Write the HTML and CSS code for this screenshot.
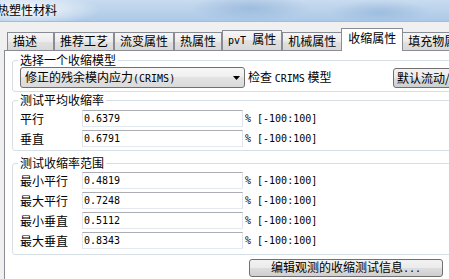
FILE: index.html
```html
<!DOCTYPE html>
<html>
<head>
  <meta charset="utf-8">
  <title>热塑性材料</title>
  <link rel="stylesheet" href="styles.css">
</head>
<body>
  <div class="titlebar"><span class="title">热塑性材料</span></div>

  <div class="tabs">
    <div class="tab tab-first">描述</div>
    <div class="tab">推荐工艺</div>
    <div class="tab">流变属性</div>
    <div class="tab">热属性</div>
    <div class="tab"><span class="en">pvT </span>属性</div>
    <div class="tab">机械属性</div>
    <div class="tab active">收缩属性</div>
    <div class="tab">填充物属性</div>
  </div>

  <div class="panel">
    <fieldset class="group group-model">
      <legend>选择一个收缩模型</legend>
      <div class="model-row">
        <div class="combo">
          <span>修正的残余模内应力<span class="en">(CRIMS)</span></span>
          <svg class="arrow" width="7" height="4" viewBox="0 0 7 4"><polygon points="0,0 7,0 3.5,4" fill="#000"/></svg>
        </div>
        <span class="check">检查 <span class="en">CRIMS</span> 模型</span>
        <button class="btn btn-default">默认流动/保压</button>
      </div>
    </fieldset>

    <fieldset class="group group-avg">
      <legend>测试平均收缩率</legend>
      <div class="field-row">
        <span class="field-label">平行</span>
        <input class="field-input" type="text" value="0.6379" readonly>
        <span class="field-range en">% [-100:100]</span>
      </div>
      <div class="field-row">
        <span class="field-label">垂直</span>
        <input class="field-input" type="text" value="0.6791" readonly>
        <span class="field-range en">% [-100:100]</span>
      </div>
    </fieldset>

    <fieldset class="group group-range">
      <legend>测试收缩率范围</legend>
      <div class="field-row">
        <span class="field-label">最小平行</span>
        <input class="field-input" type="text" value="0.4819" readonly>
        <span class="field-range en">% [-100:100]</span>
      </div>
      <div class="field-row">
        <span class="field-label">最大平行</span>
        <input class="field-input" type="text" value="0.7248" readonly>
        <span class="field-range en">% [-100:100]</span>
      </div>
      <div class="field-row">
        <span class="field-label">最小垂直</span>
        <input class="field-input" type="text" value="0.5112" readonly>
        <span class="field-range en">% [-100:100]</span>
      </div>
      <div class="field-row">
        <span class="field-label">最大垂直</span>
        <input class="field-input" type="text" value="0.8343" readonly>
        <span class="field-range en">% [-100:100]</span>
      </div>
    </fieldset>

    <button class="btn btn-edit">编辑观测的收缩测试信息<span class="en">...</span></button>
  </div>
</body>
</html>
```

FILE: styles.css
```css
/* Base */

html,
body {
  margin: 0;
  padding: 0;
}

body {
  width: 449px;
  height: 279px;
  overflow: hidden;
  background: #f0f0f0;
  color: #000;
  font-family: "Noto Sans CJK SC", sans-serif;
  font-size: 12px;
  line-height: 12px;
}

.en {
  font-family: "DejaVu Sans Mono", monospace;
  font-size: 10px;
}

/* Title bar */

.titlebar {
  height: 21px;
  border-bottom: 1px solid #a7bbd1;
  background:
    radial-gradient(ellipse 75px 16px at 26px 10px, rgba(255, 255, 255, 0.9), rgba(255, 255, 255, 0)),
    radial-gradient(ellipse 60px 14px at 250px 8px, rgba(120, 160, 205, 0.45), rgba(120, 160, 205, 0)),
    radial-gradient(ellipse 50px 12px at 380px 12px, rgba(120, 160, 205, 0.4), rgba(120, 160, 205, 0)),
    linear-gradient(#c8dbef, #acc9e8);
  white-space: nowrap;
}

.title {
  display: block;
  margin-left: -3px;
  padding-top: 4px;
}

/* Tabs */

.tabs {
  display: flex;
  align-items: flex-end;
  height: 22px;
  padding: 6px 0 0 7px;
  white-space: nowrap;
}

.tab {
  flex: none;
  padding: 0 5px 1px;
  line-height: 16px;
  border: 1px solid #898c95;
  border-bottom: none;
  background: linear-gradient(#f5f5f5, #ebebeb 50%, #e1e1e1 50%, #d8d8d8);
}

.tab-first {
  padding-right: 16px;
}

.tab.active {
  position: relative;
  z-index: 1;
  margin: 0 -1px -1px;
  padding: 1px 6px 5px;
  background: #fff;
}

/* Panel */

.panel {
  width: 520px;
  height: 240px;
  margin-left: 4px;
  border: 1px solid #898c95;
  background: #fff;
}

.group {
  width: 500px;
  min-width: 0;
  margin: 0 0 0 7px;
  padding: 0 0 3px 7px;
  border: 1px solid #d5dfe5;
  border-radius: 3px;
}

.group legend {
  margin-left: -2px;
  padding: 0 2px;
  line-height: 12px;
}

.group-model {
  margin-top: 3px;
  padding-top: 1px;
}

.group-avg {
  margin-top: 2px;
  padding-top: 4px;
}

.group-range {
  margin-top: 6px;
  padding-top: 3px;
  padding-bottom: 5px;
}

/* Model row */

.model-row {
  display: flex;
  align-items: center;
  height: 21px;
  white-space: nowrap;
}

.combo {
  box-sizing: border-box;
  display: flex;
  align-items: center;
  justify-content: space-between;
  width: 225px;
  height: 21px;
  padding: 0 4px;
  border: 1px solid #707070;
  border-radius: 3px;
  background: linear-gradient(#f7f7f7, #eeeeee 50%, #e3e3e3 50%, #dadada);
}

.check {
  width: 145px;
  margin-left: 3px;
}

.btn {
  box-sizing: border-box;
  margin: 0;
  padding: 0 3px;
  border: 1px solid #707070;
  border-radius: 3px;
  background: linear-gradient(#f2f2f2, #ebebeb 50%, #dddddd 50%, #cfcfcf);
  color: #000;
  font-family: "Noto Sans CJK SC", sans-serif;
  font-size: 12px;
  line-height: 12px;
  white-space: nowrap;
}

.btn-default {
  height: 20px;
  text-align: left;
}

.btn-edit {
  display: block;
  width: 194px;
  height: 18px;
  margin: 4px 0 0 244px;
}

/* Fields */

.field-row {
  display: flex;
  align-items: center;
  height: 17px;
  white-space: nowrap;
}

.field-row + .field-row {
  margin-top: 3px;
}

.field-label {
  width: 62px;
}

.field-input {
  box-sizing: border-box;
  width: 161px;
  height: 17px;
  margin: 0;
  padding: 0 0 0 1px;
  border: 1px solid #e2e3ea;
  border-top-color: #abadb3;
  border-bottom-color: #e3e9ef;
  border-radius: 0;
  outline: none;
  background: #fff;
  color: #000;
  font-family: "DejaVu Sans Mono", monospace;
  font-size: 10px;
}

.field-range {
  margin-left: 2px;
}
```
